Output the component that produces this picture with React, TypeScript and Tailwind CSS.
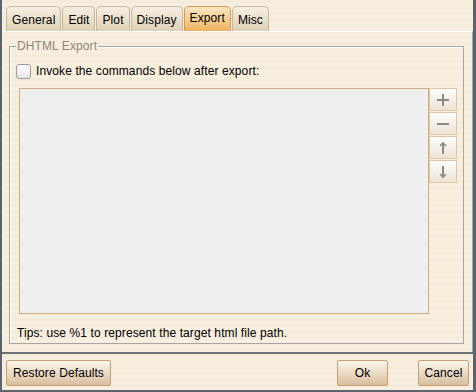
import React from "react";

const tabs = ["General", "Edit", "Plot", "Display", "Export", "Misc"];

function Tab({ label, active }: { label: string; active?: boolean }) {
  return (
    <div
      className={`h-[25px] px-[5px] flex items-center rounded-t-[5px] border border-b-0 text-[12px] text-black ${
        active
          ? "bg-gradient-to-b from-[#fbe6c0] to-[#eeb35e] border-[#d89a52] pb-[3px]"
          : "bg-gradient-to-b from-[#f6efe2] to-[#ddd0b6] border-[#c5b8a0] pt-[1px]"
      }`}
    >
      {label}
    </div>
  );
}

function SideButton({ children }: { children: React.ReactNode }) {
  return (
    <div className="w-[28px] h-[23px] flex items-center justify-center border border-[#e0c6a6] bg-gradient-to-b from-[#ffffff] to-[#ece2d0]">
      <svg width="16" height="16" viewBox="0 0 16 16" fill="none" stroke="#8a8a8a" strokeWidth="2">
        {children}
      </svg>
    </div>
  );
}

function Button({ label, width }: { label: string; width: string }) {
  return (
    <div
      className={`${width} h-[26px] flex items-center justify-center rounded-[2px] border border-[#c99f70] bg-gradient-to-b from-[#fbf6ec] to-[#d8bf9e] text-[12px] text-black`}
    >
      {label}
    </div>
  );
}

export default function App() {
  return (
    <div className="w-[476px] h-[392px] flex flex-col border-l-2 border-r-[3px] border-b-2 border-[#5b646c] bg-[repeating-linear-gradient(0deg,#f8efe1_0px,#f8efe1_3px,#f3e8d5_4px,#f8efe1_6px)] font-['Liberation_Sans',Arial,sans-serif] text-[12px] tracking-[0.1px] overflow-hidden">
      {/* Tab strip */}
      <div className="h-[31px] pt-[6px] pl-[4px] flex items-end gap-[1px]">
        {tabs.map((t) => (
          <Tab key={t} label={t} active={t === "Export"} />
        ))}
      </div>

      {/* Tab panel */}
      <div className="h-[321px] border-t border-white border-r border-r-[#a4a8ac] pl-[7px] pt-[14px]">
        <div className="relative w-[455px] h-[298px] border border-[#a6a6a6] shadow-[inset_1px_1px_0_#ffffff]">
          <div className="absolute left-[6px] top-[-8px] px-[1px] bg-[#f7eee0] text-[#8e8578] leading-[14px]">
            DHTML Export
          </div>

          <div className="pl-[6px] pt-[15px] flex items-center gap-[5px]">
            <div className="w-[15px] h-[15px] rounded-[3px] border border-[#9c9c9c] bg-gradient-to-b from-[#ffffff] to-[#e6e6e6]" />
            <span className="text-black">Invoke the commands below after export:</span>
          </div>

          <div className="pl-[9px] pt-[8px] flex">
            <div className="w-[410px] h-[226px] bg-[#efefef] border border-[#d4ab7e]" />
            <div className="flex flex-col gap-[1px]">
              <SideButton>
                <path d="M2 8h12M8 2v12" />
              </SideButton>
              <SideButton>
                <path d="M2 8h12" />
              </SideButton>
              <SideButton>
                <path d="M8 14V4" />
                <path d="M5 6l3-3 3 3" strokeWidth="1.6" />
              </SideButton>
              <SideButton>
                <path d="M8 2v10" />
                <path d="M5 10l3 3 3-3" strokeWidth="1.6" />
              </SideButton>
            </div>
          </div>

          <div className="pl-[7px] pt-[12px] text-black leading-[14px]">
            Tips: use %1 to represent the target html file path.
          </div>
        </div>
      </div>

      {/* Separator */}
      <div className="h-[2px] bg-[#6a7178]" />

      {/* Bottom buttons */}
      <div className="flex-1 flex items-start pt-[6px] px-[4px]">
        <Button label="Restore Defaults" width="w-[105px]" />
        <div className="flex-1" />
        <Button label="Ok" width="w-[51px]" />
        <div className="w-[30px]" />
        <Button label="Cancel" width="w-[51px]" />
      </div>
    </div>
  );
}
